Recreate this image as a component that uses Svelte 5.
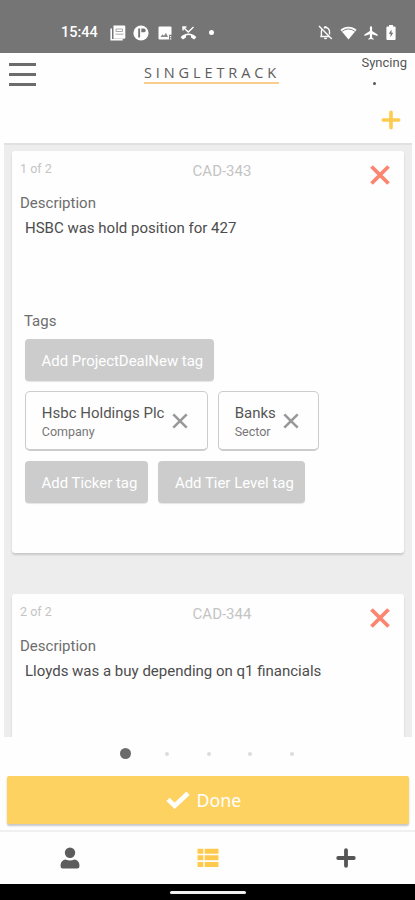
<script lang="ts">
  type Tag = { name: string; kind?: string };

  const cards: { id: string; text: string; rows: Tag[][] }[] = [
    {
      id: 'CAD-343',
      text: 'HSBC was hold position for 427',
      rows: [
        [{ name: 'Add ProjectDealNew tag' }],
        [
          { name: 'Hsbc Holdings Plc', kind: 'Company' },
          { name: 'Banks', kind: 'Sector' },
        ],
        [{ name: 'Add Ticker tag' }, { name: 'Add Tier Level tag' }],
      ],
    },
    {
      id: 'CAD-344',
      text: 'Lloyds was a buy depending on q1 financials',
      rows: [],
    },
  ];

  let page = 0;
</script>

<div class="phone">
  <div class="status">
    <span class="clock">15:44</span>
    <svg class="news" width="16" height="16" viewBox="0 0 16 16">
      <path d="M3.5 0.5h10.5a1.3 1.3 0 0 1 1.3 1.3v10.7a1.3 1.3 0 0 1-1.3 1.3H3.5z" fill="#fff" />
      <path d="M1.2 3.5v11.2h11.5" fill="none" stroke="#fff" stroke-width="1.6" />
      <path d="M6 4h6.5v2.5H6zM5.5 9.2h8" fill="none" stroke="#a0a0a0" stroke-width="0.9" />
    </svg>
    <svg class="disc" width="16" height="16" viewBox="0 0 16 16">
      <circle cx="8" cy="8" r="7.6" fill="#fff" />
      <path d="M5.2 3.5h1.9v9H5.2zM8.3 3.5h2.5a1.9 1.9 0 0 1 0 3.8H8.3z" fill="#757575" />
    </svg>
    <svg class="image" width="14" height="14" viewBox="0 0 14 14">
      <path d="M1.5 0.5h11a1 1 0 0 1 1 1v7.3h-2.4v4.7H1.5a1 1 0 0 1-1-1v-11a1 1 0 0 1 1-1z" fill="#fff" />
      <path d="M2.5 11l2-2.7 1.5 1.5 2-3L10 11z" fill="#8a8a8a" />
      <path d="M12.6 10v1.2M12.6 12.2v1.3" stroke="#fff" stroke-width="1.3" />
    </svg>
    <svg class="missed" width="17" height="14" viewBox="0 0 17 14">
      <path d="M3 1l5.3 5L13.5 1M3 4.5V1h3.5" fill="none" stroke="#fff" stroke-width="1.4" />
      <path d="M.6 11.2C5 6.4 12 6.4 16.4 11.2l-2.3 2.3-3.1-1.9V9.4a8 8 0 0 0-5 0v2.2l-3.1 1.9z" fill="#fff" />
    </svg>
    <span class="more"></span>
    <svg class="bell" width="15" height="15" viewBox="0 0 15 15">
      <path d="M1 1l12.8 13" stroke="#fff" stroke-width="1.3" />
      <path d="M3.4 11.3V6.5A4 4 0 0 1 4.3 4M5.8 2.8a4 4 0 0 1 5.7 3.7v3M2.3 11.5h8.8" fill="none" stroke="#fff" stroke-width="1.4" />
      <path d="M6.3 1.2h2.3v2H6.3zM5.9 12.7h3.2a1.6 1.6 0 0 1-3.2 0z" fill="#fff" />
    </svg>
    <svg class="wifi" width="17" height="14" viewBox="0 0 17 14">
      <path d="M0.4 3.8a12 12 0 0 1 16.2 0L8.5 13.6z" fill="#fff" />
      <path d="M2.2 5.3a9.6 9.6 0 0 1 12.6 0" fill="none" stroke="#757575" stroke-width="0.9" />
    </svg>
    <svg class="plane" width="14" height="14" viewBox="0 0 14 14">
      <path d="M7 0.2a1.1 1.1 0 0 1 1.1 1.1V5l5.5 3.4v1.5L8.1 8.2v3.5l1.5 1.1v1L7 13.1l-2.6.7v-1l1.5-1.1V8.2L.4 9.9V8.4L5.9 5V1.3A1.1 1.1 0 0 1 7 .2z" fill="#fff" />
    </svg>
    <svg class="battery" width="10" height="15" viewBox="0 0 10 15">
      <path d="M3 0h4v1.5h1.6a1 1 0 0 1 1 1V14a1 1 0 0 1-1 1H1.4a1 1 0 0 1-1-1V2.5a1 1 0 0 1 1-1H3z" fill="#fff" />
      <path d="M5.5 4.5L2.8 8.8h1.7v3.4l2.7-4.4H5.5z" fill="#757575" />
    </svg>
  </div>

  <header>
    <button class="menu" aria-label="Menu"><i></i><i></i><i></i></button>
    <div class="logo">SINGLETRACK</div>
    <div class="sync">
      <span>Syncing</span>
      <b></b>
    </div>
  </header>

  <div class="toolbar">
    <button aria-label="Add entry">
      <svg width="20" height="20" viewBox="0 0 20 20">
        <path d="M10 2.3v15.4M2.3 10h15.4" stroke="#fdcb4f" stroke-width="3.6" stroke-linecap="round" />
      </svg>
    </button>
  </div>

  <main>
    {#each cards as card, i}
      <section class="card">
        <div class="card-head">
          <span class="count">{i + 1} of {cards.length}</span>
          <span class="ref">{card.id}</span>
          <button class="remove" aria-label="Remove">
            <svg width="20" height="20" viewBox="0 0 20 20">
              <path d="M1.5 1.5l17 17M18.5 1.5l-17 17" stroke="#fb8570" stroke-width="3.8" />
            </svg>
          </button>
        </div>
        <div class="label">Description</div>
        <div class="text">{card.text}</div>
        {#if card.rows.length}
          <div class="label tags-label">Tags</div>
        {/if}
        {#each card.rows as row}
          <div class="row">
            {#each row as tag}
              {#if tag.kind}
                <div class="tag">
                  <div>
                    <div class="name">{tag.name}</div>
                    <div class="kind">{tag.kind}</div>
                  </div>
                  <svg width="16" height="16" viewBox="0 0 16 16">
                    <path d="M1.3 1.3l13.4 13.4M14.7 1.3L1.3 14.7" stroke="#999" stroke-width="2.6" />
                  </svg>
                </div>
              {:else}
                <button class="add">{tag.name}</button>
              {/if}
            {/each}
          </div>
        {/each}
      </section>
    {/each}
  </main>

  <div class="pager">
    {#each Array(5) as _, i}
      <span><i class:active={i === page}></i></span>
    {/each}
  </div>

  <button class="done">
    <svg width="24" height="18" viewBox="0 0 24 18">
      <path d="M2 8.4l6.7 6.4L22 2.3" fill="none" stroke="#fff" stroke-width="4.6" />
    </svg>
    <span>Done</span>
  </button>

  <nav>
    <button aria-label="Profile">
      <svg width="20" height="22" viewBox="0 0 20 22">
        <circle cx="10" cy="5.7" r="5.2" fill="#5c5c5c" />
        <path d="M0.6 19.5v-1.7a5.3 5.3 0 0 1 5-5.3c2.7 1.3 6.1 1.3 8.8 0a5.3 5.3 0 0 1 5 5.3v1.7a2 2 0 0 1-2 2H2.6a2 2 0 0 1-2-2z" fill="#5c5c5c" />
      </svg>
    </button>
    <button aria-label="List">
      <svg width="22" height="20" viewBox="0 0 22 20">
        <path d="M0.5 0.7h5.8v5H0.5zM7.7 0.7h13.8v5H7.7zM0.5 7.3h5.8v5H0.5zM7.7 7.3h13.8v5H7.7zM0.5 14h5.8v5H0.5zM7.7 14h13.8v5H7.7z" fill="#fdca4d" />
      </svg>
    </button>
    <button aria-label="New">
      <svg width="20" height="20" viewBox="0 0 20 20">
        <path d="M10 2.2v15.6M2.2 10h15.6" stroke="#555" stroke-width="3.8" stroke-linecap="round" />
      </svg>
    </button>
  </nav>

  <div class="gesture"><i></i></div>
</div>

<style>
:global(body) { margin: 0; background: #fff; }
.phone { width: 415px; height: 900px; display: flex; flex-direction: column; overflow: hidden; background: #fefefe; font-family: Roboto, sans-serif; color: #555; }
button { border: 0; padding: 0; margin: 0; background: none; font: inherit; color: inherit; }
svg { display: block; flex: none; }

.status { flex: none; height: 53px; box-sizing: border-box; padding: 12px 19px 0 61px; display: flex; align-items: center; background: #757575; color: #fff; }
.clock { width: 48.5px; font-size: 14.5px; font-weight: 500; }
.disc { margin-left: 7px; }
.image { margin-left: 9px; }
.missed { margin-left: 8px; }
.more { width: 5px; height: 5px; border-radius: 50%; background: #fff; margin-left: 12px; }
.bell { margin-left: auto; }
.wifi { margin-left: 7px; }
.plane { margin-left: 7px; }
.battery { margin-left: 8px; }

header { flex: none; height: 44px; display: grid; grid-template-columns: 144px 1fr 136px; }
.menu { width: 27px; margin: 10px 0 0 9px; display: flex; flex-direction: column; gap: 6.5px; }
.menu i { height: 3.3px; background: #6c6c6c; }
.logo { justify-self: start; align-self: start; margin-top: 11px; height: 18px; line-height: 17px; border-bottom: 2px solid #f8cd90; font-family: 'Open Sans', sans-serif; font-size: 14.5px; font-weight: 500; letter-spacing: 3.9px; width: 135px; white-space: nowrap; color: #5c5c5c; }
.sync { font-size: 13px; line-height: 19px; text-align: right; padding-right: 8px; }
.sync b { display: block; width: 3px; height: 3px; border-radius: 50%; background: #555; margin: 10px 31px 0 auto; }

.toolbar { flex: none; height: 46px; display: flex; justify-content: flex-end; padding: 13px 14.5px 0 0; box-sizing: border-box; }
.toolbar button { height: 20px; }

main { flex: none; height: 594px; box-sizing: border-box; margin: 0 3px 0 4px; padding: 6px 8px 0; background: #ededed; border-top: 2px solid #e0e0e0; overflow: hidden; }
.card { height: 402px; box-sizing: border-box; padding: 0 14px 0 8px; margin-bottom: 41px; border-radius: 3px; background: #fefefe; box-shadow: 0 2px 2px rgba(0,0,0,0.15); overflow: hidden; }
.card-head { height: 42px; display: grid; grid-template-columns: 153px 98px 1fr; }
.count { font-size: 12.5px; line-height: 36px; color: #c4c4c4; }
.ref { font-size: 15px; line-height: 40px; text-align: center; color: #c4c4c4; }
.remove { justify-self: end; align-self: start; margin-top: 14px; }
.label { font-size: 15px; line-height: 20px; color: #6d6d6d; }
.text { height: 98px; padding: 5px 5px 0; font-size: 15px; line-height: 20px; box-sizing: border-box; color: #4c4c4c; white-space: nowrap; }
.tags-label { padding-left: 4px; margin-bottom: 8px; }
.row { display: flex; gap: 10px; margin: 0 0 10px 5px; }
.add { height: 42px; padding: 2px 11px 0 16.5px; border-radius: 4px; background: #ccc; color: #fff; font-size: 14.95px; box-shadow: 0 1px 1px rgba(0,0,0,0.1); white-space: nowrap; }
.tag { display: flex; align-items: center; gap: 7.5px; height: 60px; box-sizing: border-box; padding: 0 19px 0 15.8px; border: 1px solid #ccc; border-bottom-width: 2px; border-radius: 5px; white-space: nowrap; }
.name { font-size: 15px; line-height: 19px; margin-top: 3px; }
.kind { font-size: 12.5px; line-height: 18px; color: #777; }

.pager { flex: none; height: 39px; padding: 0 102.5px 0 105px; display: grid; grid-template-columns: repeat(5, 1fr); box-sizing: border-box; }
.pager span { display: flex; align-items: center; justify-content: center; height: 33px; }
.pager i { width: 4px; height: 4px; border-radius: 50%; background: #dcdcdc; }
.pager i.active { width: 11px; height: 11px; background: #6b6b6b; }

.done { flex: none; height: 48px; margin: 0 6px 0 7px; padding-right: 9px; display: flex; align-items: center; justify-content: center; gap: 7px; border-radius: 2px; background: #fed260; color: #fff; font-family: 'Noto Sans', sans-serif; font-size: 17.8px; box-shadow: 0 2px 2px rgba(0,0,0,0.22); }

nav { flex: none; height: 54px; margin-top: 6px; padding: 0 0 1px 1px; box-sizing: border-box; border-top: 2px solid #f0f0f2; display: grid; grid-template-columns: repeat(3, 1fr); }
nav button { display: flex; align-items: center; justify-content: center; }
.gesture { flex: 1; background: #000; display: flex; justify-content: center; }
.gesture i { width: 76px; height: 3px; border-radius: 2px; background: #f0f0f0; margin-top: 7px; }
</style>
